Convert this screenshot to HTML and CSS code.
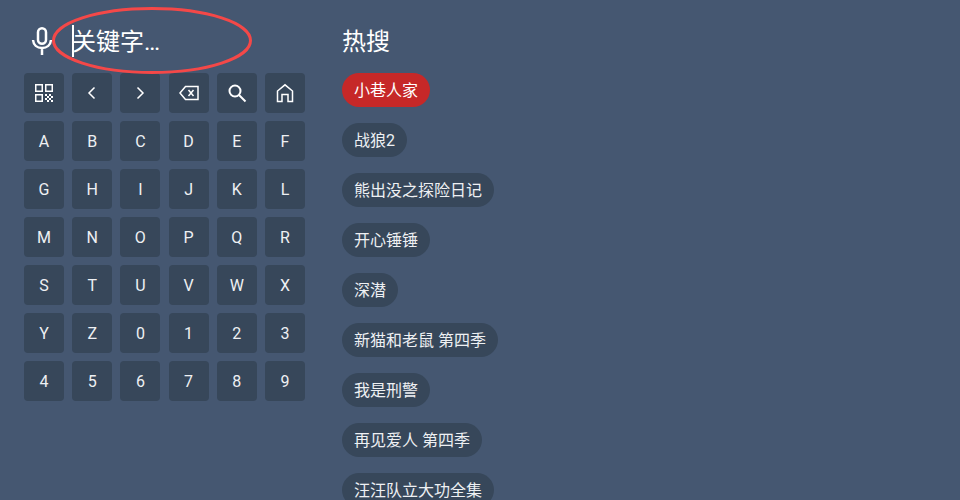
FILE: index.html
```html
<!DOCTYPE html>
<html lang="zh">
<head>
    <meta charset="UTF-8">
    <title>搜索</title>
    <link rel="stylesheet" href="styles.css">
</head>
<body>

<div class="search-panel">
    <div class="search-bar">
        <svg class="mic-icon" width="24" height="32" viewBox="0 0 24 32" fill="none" stroke="#fff" stroke-width="2.500">
            <rect x="8" y="3.250" width="8" height="15.500" rx="4"/>
            <path d="M3 15c.5 5 4 8 9 8s8.500-3 9-8M12 23v7"/>
        </svg>
        <div class="search-input"><span class="cursor"></span>关键字…</div>
        <svg class="ring" width="204" height="72" viewBox="0 0 204 72" fill="none">
            <ellipse cx="102" cy="35.500" rx="98.500" ry="32" stroke="#f44848" stroke-width="3"/>
        </svg>
    </div>

    <div class="keyboard">
        <div class="key">
            <svg width="20" height="20" viewBox="0 0 20 20" fill="none" stroke="#fff" stroke-width="1.500">
                <rect x="1.750" y="1.750" width="6.500" height="6.500"/>
                <rect x="11.750" y="1.750" width="6.500" height="6.500"/>
                <rect x="1.750" y="11.750" width="6.500" height="6.500"/>
                <path d="M11 11h2v2h-2zM15 11h2v2h-2zM13 13h2v2h-2zM17 13h2v2h-2zM11 15h2v2h-2zM15 15h2v2h-2zM13 17h2v2h-2zM17 17h2v2h-2z" fill="#fff" stroke="none"/>
            </svg>
        </div>
        <div class="key">
            <svg width="20" height="20" viewBox="0 0 20 20" fill="none" stroke="#fff" stroke-width="1.500"><path d="M12.500 4.500L7 10l5.500 5.500"/></svg>
        </div>
        <div class="key">
            <svg width="20" height="20" viewBox="0 0 20 20" fill="none" stroke="#fff" stroke-width="1.500"><path d="M7.500 4.500L13 10l-5.500 5.500"/></svg>
        </div>
        <div class="key">
            <svg width="20" height="20" viewBox="0 0 20 20" fill="none" stroke="#fff" stroke-width="1.500">
                <path d="M6.500 3.500H19v13H6.500L1 10z"/>
                <path d="M9.500 7l5 6M14.500 7l-5 6"/>
            </svg>
        </div>
        <div class="key">
            <svg width="20" height="20" viewBox="0 0 20 20" fill="none" stroke="#fff" stroke-width="2">
                <circle cx="8" cy="8" r="5.500"/>
                <path d="M12 12l6.500 6.500"/>
            </svg>
        </div>
        <div class="key">
            <svg width="20" height="20" viewBox="0 0 20 20" fill="none" stroke="#fff" stroke-width="1.500">
                <path d="M2.500 18.500V8L10 1.800 17.500 8v10.500h-4.500V11.500H7v7z"/>
            </svg>
        </div>
        <div class="key">A</div><div class="key">B</div><div class="key">C</div><div class="key">D</div><div class="key">E</div><div class="key">F</div>
        <div class="key">G</div><div class="key">H</div><div class="key">I</div><div class="key">J</div><div class="key">K</div><div class="key">L</div>
        <div class="key">M</div><div class="key">N</div><div class="key">O</div><div class="key">P</div><div class="key">Q</div><div class="key">R</div>
        <div class="key">S</div><div class="key">T</div><div class="key">U</div><div class="key">V</div><div class="key">W</div><div class="key">X</div>
        <div class="key">Y</div><div class="key">Z</div><div class="key">0</div><div class="key">1</div><div class="key">2</div><div class="key">3</div>
        <div class="key">4</div><div class="key">5</div><div class="key">6</div><div class="key">7</div><div class="key">8</div><div class="key">9</div>
    </div>
</div>

<div class="hot-panel">
    <h2>热搜</h2>
    <div class="hot-list">
        <div class="pill active">小巷人家</div>
        <div class="pill">战狼2</div>
        <div class="pill">熊出没之探险日记</div>
        <div class="pill">开心锤锤</div>
        <div class="pill">深潜</div>
        <div class="pill">新猫和老鼠 第四季</div>
        <div class="pill">我是刑警</div>
        <div class="pill">再见爱人 第四季</div>
        <div class="pill">汪汪队立大功全集</div>
    </div>
</div>

</body>
</html>
```

FILE: styles.css
```css
html, body {
    height: 100%;
}

body {
    margin: 0;
    background-color: #455771;
    color: #fff;
    font-family: Roboto, "Noto Sans CJK SC", sans-serif;
    display: flex;
    overflow: hidden;
}

.search-panel {
    width: 281px;
    margin-left: 24px;
    padding-top: 16px;
}

.search-bar {
    position: relative;
    display: flex;
    align-items: center;
    height: 50px;
    margin-bottom: 7px;
}

.mic-icon {
    margin-left: 6px;
    flex-shrink: 0;
}

.search-input {
    position: relative;
    margin-left: 18px;
    padding-top: 1px;
    font-size: 24px;
    line-height: 32px;
}

.cursor {
    position: absolute;
    left: 0;
    top: 0;
    width: 2px;
    height: 32px;
    background-color: #fff;
}

.ring {
    position: absolute;
    left: 26px;
    top: -11px;
}

.keyboard {
    display: grid;
    grid-template-columns: repeat(6, 40px);
    grid-auto-rows: 40px;
    justify-content: space-between;
    row-gap: 8px;
}

.key {
    display: flex;
    align-items: center;
    justify-content: center;
    background-color: #37475a;
    border-radius: 4px;
    font-size: 16px;
    color: #eef0f3;
}

.hot-panel {
    margin-left: 37px;
    padding-top: 25px;
}

h2 {
    margin: 0 0 16px;
    padding-top: 1px;
    height: 31px;
    font-size: 24px;
    font-weight: 400;
    line-height: 32px;
}

.hot-list {
    display: flex;
    flex-direction: column;
    align-items: flex-start;
    gap: 16px;
}

.pill {
    height: 33px;
    line-height: 34px;
    padding: 1px 12px 0;
    border-radius: 17px;
    background-color: #37475a;
    font-size: 16px;
    color: #eef0f3;
    white-space: nowrap;
}

.pill.active {
    background-color: #c62828;
    color: #fff;
}
```
